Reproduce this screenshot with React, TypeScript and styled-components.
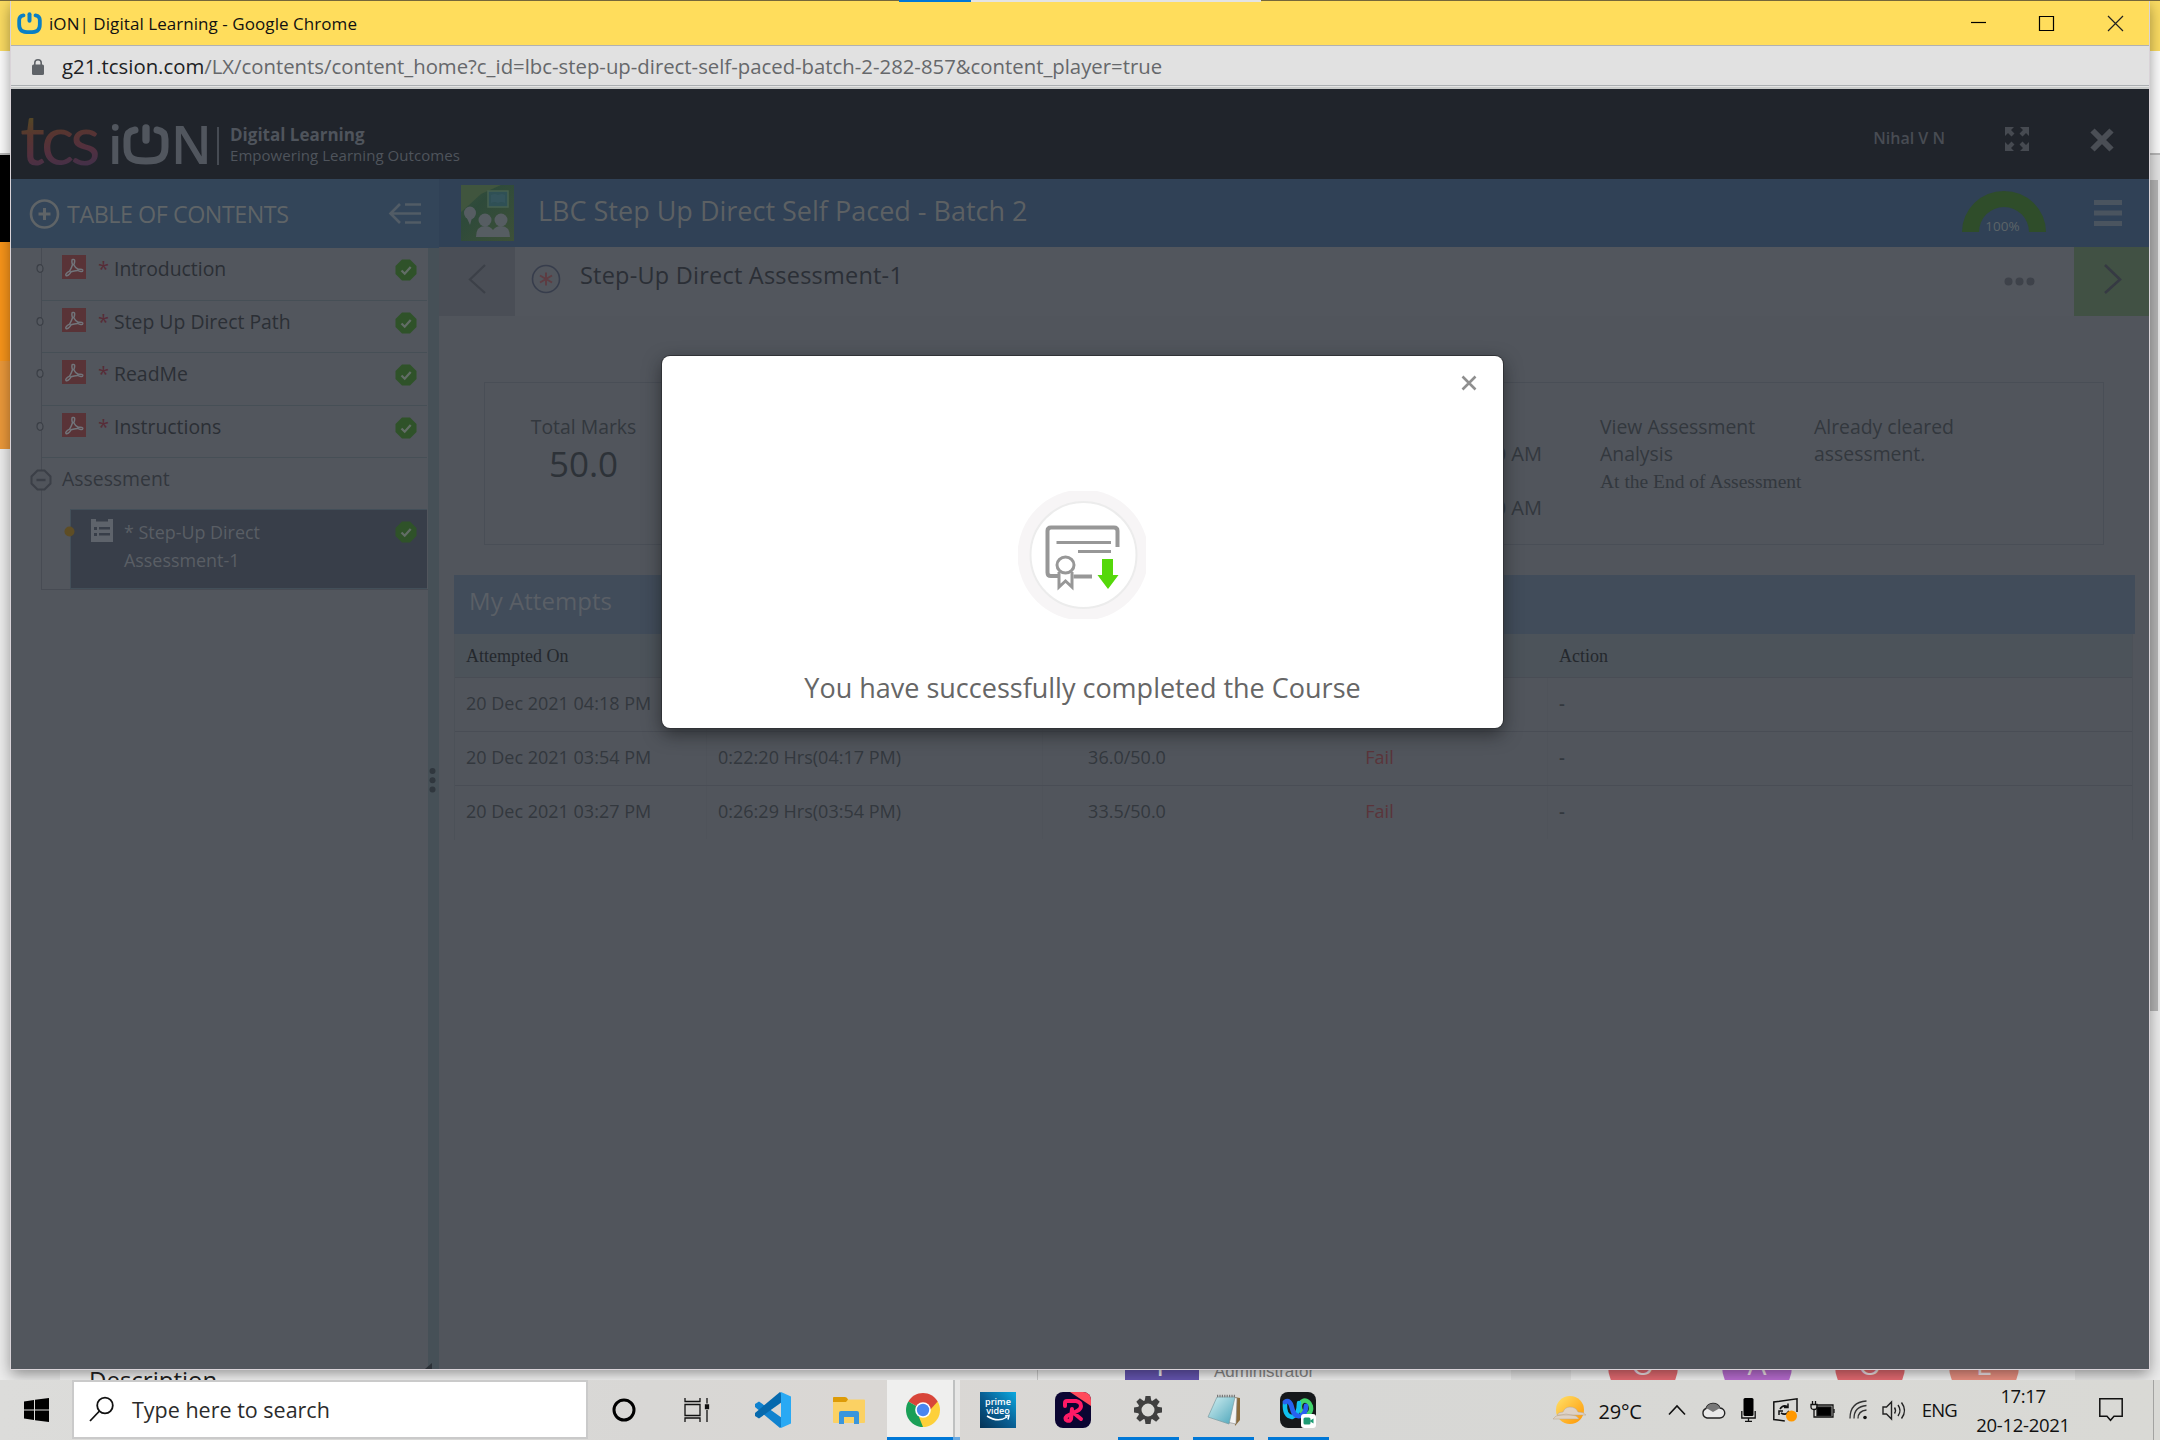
import React from 'react';
import styled, { createGlobalStyle } from 'styled-components';

const UI = '"Open Sans", "Noto Sans", sans-serif';
const SERIF = '"Liberation Serif", serif';

const GlobalStyle = createGlobalStyle`
  * { box-sizing: border-box; }
  html, body { margin: 0; padding: 0; }
  body { width: 2160px; height: 1440px; overflow: hidden; font-family: ${UI}; }
  svg { display: block; flex: none; overflow: visible; }
`;

const Text = styled.span<{ $size: number; $color?: string; $ls?: number; $weight?: number; $lh?: number; $serif?: boolean }>`
  display: block;
  white-space: nowrap;
  font-family: ${p => (p.$serif ? SERIF : UI)};
  font-size: ${p => p.$size}px;
  line-height: ${p => (p.$lh ? p.$lh + 'px' : '1.36')};
  letter-spacing: ${p => p.$ls ?? 0}px;
  font-weight: ${p => p.$weight ?? 400};
  color: ${p => p.$color ?? 'inherit'};
`;

/* ---------- desktop and the window behind ---------- */
const Desktop = styled.div`
  position: relative;
  width: 2160px;
  height: 1440px;
  overflow: hidden;
  background: #f6f6f6;
`;
const BackWindow = styled.div`
  display: flex;
  justify-content: space-between;
  height: 1380px;
`;
const EdgeColumn = styled.div<{ $w: number }>`
  display: flex;
  flex-direction: column;
  width: ${p => p.$w}px;
`;
const Band = styled.div<{ $h: number; $bg: string }>`
  flex: none;
  height: ${p => p.$h}px;
  background: ${p => p.$bg};
`;
const BottomStrip = styled.div`
  position: absolute;
  left: 0;
  top: 1340px;
  width: 2160px;
  height: 100px;
  background: #f8f8f8;
`;
const Strip = styled.div<{ $x: number; $w: number; $bg: string }>`
  position: absolute;
  left: ${p => p.$x}px;
  top: 0;
  width: ${p => p.$w}px;
  height: 40px;
  background: ${p => p.$bg};
`;
const Peek = styled.div<{ $x: number; $y: number }>`
  position: absolute;
  left: ${p => p.$x}px;
  top: ${p => p.$y}px;
`;
const AdminLabel = styled.span`
  display: block;
  font: 17px/22px "Liberation Sans", sans-serif;
  color: #8a8a8a;
`;
const Avatar = styled.div<{ $x: number; $bg: string }>`
  position: absolute;
  left: ${p => p.$x}px;
  top: -9px;
  width: 70px;
  height: 70px;
  border-radius: 50%;
  background: ${p => p.$bg};
  color: #f6e9ee;
  text-align: center;
  font: 30px/66px ${UI};
`;
const TopEdge = styled.div`
  position: absolute;
  left: 0;
  top: 0;
  width: 2160px;
  height: 2px;
  display: flex;
`;
const Seg = styled.div<{ $w: number; $bg: string; $h: number }>`
  width: ${p => p.$w}px;
  height: ${p => p.$h}px;
  background: ${p => p.$bg};
`;

/* ---------- chrome window ---------- */
const Window = styled.div`
  position: absolute;
  left: 11px;
  top: 1px;
  width: 2138px;
  height: 1368px;
  display: flex;
  flex-direction: column;
  background: #52565d;
  box-shadow: 0 0 0 1px #d9d3d8, 0 5px 14px rgba(0, 0, 0, 0.42);
  clip-path: inset(-2px -12px -30px -12px);
`;
const TitleBar = styled.div`
  flex: none;
  height: 44px;
  display: flex;
  align-items: center;
  background: #ffdd5c;
  padding: 1px 26px 0 6px;
`;
const AddressBar = styled.div`
  flex: none;
  height: 44px;
  display: flex;
  align-items: center;
  padding: 0 0 2px 21px;
  border-top: 1px solid #b1b1b1;
  background: linear-gradient(#e1e1e1 0 39px, #abafb2 39px 40px, #e4e4e4 40px 41px, #c9cbca 41px);
`;
const Spacer = styled.div<{ $w?: number }>`
  flex: ${p => (p.$w ? `0 0 ${p.$w}px` : '1')};
`;

const SiteHeader = styled.div`
  flex: none;
  height: 90px;
  display: flex;
  align-items: flex-start;
  background: #20242b;
  color: #484c53;
`;
const Logo = styled.div`
  display: flex;
  align-items: flex-start;
  height: 90px;
  padding-left: 9px;
`;
const Tcs = styled.span`
  font: 400 70px/88px "Lato", ${UI};
  letter-spacing: -4px;
  width: 88px;
  height: 90px;
  padding-top: 5px;
  color: transparent;
  background: linear-gradient(172deg, #554726 30%, #573530 48%, #53303e 66%, #41304a 86%);
  -webkit-background-clip: text;
  background-clip: text;
`;
const IonLetter = styled.span<{ $w: number }>`
  font: 600 52px/70px ${UI};
  padding-top: 20px;
  width: ${p => p.$w}px;
  color: #51565e;
`;
const LogoRule = styled.div`
  width: 2px;
  height: 38px;
  margin: 38px 11px 0 9px;
  background: #464b53;
`;
const LogoTag = styled.div`
  padding-top: 34px;
  color: #4f545c;
`;
const HeaderItem = styled.div<{ $top: number; $right: number }>`
  margin-top: ${p => p.$top}px;
  margin-right: ${p => p.$right}px;
`;

const Body = styled.div`
  flex: 1;
  display: flex;
  min-height: 0;
`;
const Sidebar = styled.div`
  width: 428px;
  flex: none;
  display: flex;
  flex-direction: column;
`;
const TocHeader = styled.div`
  flex: none;
  height: 69px;
  display: flex;
  align-items: center;
  background: #334559;
  color: #5f6467;
  padding: 0 18px 0 19px;
`;
const SideBody = styled.div`
  flex: 1;
  display: flex;
`;
const Tree = styled.div`
  width: 387px;
  height: 342px;
  margin-left: 30px;
  padding-right: 1px;
  border-left: 1px solid #474b53;
  border-bottom: 1px solid #474b53;
`;
const TreeRow = styled.div`
  height: 52.5px;
  display: flex;
  align-items: flex-start;
  border-bottom: 1px solid #464f56;
  color: #2b2f35;
`;
const TreeSection = styled(TreeRow)`
  height: 51px;
  border-bottom: none;
  color: #32373d;
`;
const Slot = styled.div<{ $top: number; $left?: number }>`
  margin-top: ${p => p.$top}px;
  margin-left: ${p => p.$left ?? 0}px;
`;
const Selected = styled.div`
  height: 80px;
  margin-left: 28px;
  display: flex;
  align-items: flex-start;
  background: #383e49;
  border: 1px solid #434f59;
  border-right: none;
  color: #5a5e65;
`;
const Splitter = styled.div`
  width: 11px;
  height: 1121px;
  background: #465057;
  display: flex;
  flex-direction: column;
  justify-content: space-between;
`;
const SplitDots = styled.div`
  padding-top: 519px;
`;

const Main = styled.div`
  flex: 1;
  display: flex;
  flex-direction: column;
`;
const CourseBar = styled.div`
  flex: none;
  height: 68px;
  display: flex;
  align-items: flex-start;
  background: #304156;
  color: #5c6063;
`;
const LessonBar = styled.div`
  flex: none;
  height: 69px;
  display: flex;
  align-items: center;
`;
const NavBox = styled.div<{ $next?: boolean }>`
  width: ${p => (p.$next ? 75 : 76)}px;
  height: 69px;
  background: ${p => (p.$next ? '#415144' : '#4a4e56')};
`;
const Content = styled.div`
  flex: 1;
  background: #51555c;
  padding: 66px 14px 0 15px;
`;
const Summary = styled.div`
  height: 163px;
  margin: 0 31px 0 30px;
  border: 1px solid #494e56;
  display: flex;
  align-items: flex-start;
  color: #33383e;
  padding-top: 30px;
`;
const Marks = styled.div`
  width: 197px;
  display: flex;
  flex-direction: column;
  align-items: center;
`;
const Cell = styled.div<{ $w: number }>`
  width: ${p => p.$w}px;
`;
const Times = styled.div<{ $w: number }>`
  width: ${p => p.$w}px;
  padding-top: 27px;
  display: flex;
  flex-direction: column;
  align-items: flex-end;
  gap: 27px;
`;
const SectionBar = styled.div`
  height: 59px;
  margin-top: 30px;
  padding: 10px 0 0 15px;
  background: #414c5a;
  color: #5a5f66;
`;
const Table = styled.div`
  border-left: 1px solid #4c5158;
  border-right: 1px solid #4c5158;
  margin-right: 2px;
`;
const TRow = styled.div<{ $h: number; $bg?: string; $last?: boolean }>`
  display: grid;
  grid-template-columns: 252px 336px 169px 336px 1fr;
  height: ${p => p.$h}px;
  background: ${p => p.$bg ?? 'transparent'};
  border-bottom: 1px solid ${p => (p.$last ? 'transparent' : '#494d55')};
  color: #33383e;
`;
const TCell = styled.div<{ $center?: boolean; $line?: boolean; $head?: boolean }>`
  display: flex;
  align-items: center;
  justify-content: ${p => (p.$center ? 'center' : 'flex-start')};
  padding-left: ${p => (p.$center ? 0 : 11)}px;
  padding-top: ${p => (p.$head ? 1 : 0)}px;
  padding-bottom: ${p => (p.$head ? 0 : 2)}px;
  border-right: 1px solid ${p => (p.$line ? '#4f535a' : 'transparent')};
`;

/* ---------- dialog ---------- */
const Dialog = styled.div`
  position: absolute;
  left: 651px;
  top: 355px;
  width: 841px;
  height: 372px;
  border-radius: 8px;
  background: #fff;
  box-shadow: 0 0 0 1px #303236, 0 6px 18px rgba(20, 22, 24, 0.6);
  display: flex;
  flex-direction: column;
  align-items: center;
`;
const DialogTop = styled.div`
  width: 100%;
  height: 135px;
  display: flex;
  justify-content: flex-end;
  padding: 19px 26px 0 0;
`;
const DialogArt = styled.div`
  margin-right: 2px;
`;

/* ---------- taskbar ---------- */
const Taskbar = styled.div`
  position: absolute;
  left: 0;
  top: 1380px;
  width: 2160px;
  height: 60px;
  display: flex;
  background: linear-gradient(90deg, #dcdcda 0, #d8d7d5 30%, #dad7d4 40%, #d7d7d5 60%, #d9d9d5 100%);
  color: #111;
`;
const SearchBox = styled.div`
  width: 516px;
  height: 59px;
  border: 2px solid #cacaca;
  background: #fff;
  display: flex;
  align-items: center;
  padding-left: 15px;
  gap: 18px;
`;
const TaskItem = styled.div<{ $w: number; $bg?: string; $bar?: boolean }>`
  width: ${p => p.$w}px;
  height: 60px;
  flex: none;
  display: flex;
  align-items: center;
  justify-content: center;
  background: ${p => p.$bg ?? 'transparent'};
  border-top: 3px solid transparent;
  border-bottom: 3px solid ${p => (p.$bar ? '#0078d7' : 'transparent')};
`;
const GroupEdge = styled.div`
  width: 7px;
  height: 60px;
  background: linear-gradient(90deg, #bfc1c1 0 2px, #e7e7e6 2px);
  border-bottom: 3px solid #6aa9e0;
  background-clip: padding-box;
`;
const Clock = styled.div`
  display: flex;
  flex-direction: column;
  align-items: center;
  width: 92px;
`;
const ShowDesktop = styled.div`
  width: 7px;
  height: 60px;
  border-left: 1px solid #a3a3a1;
`;

const PowerGlyph = ({ w, h, color, sw }: { w: number; h: number; color: string; sw: number }) => (
  <svg width={w} height={h} viewBox="0 0 46 40" fill="none" stroke={color} strokeWidth={sw} strokeLinecap="round">
    <path d="M12 4C6 5 4 8 4 13v8c0 11 5 14 19 14s19-3 19-14v-8c0-5-2-8-8-9" />
    <path d="M23 2v12" strokeWidth={sw * 1.05} />
  </svg>
);

const PdfIcon = () => (
  <svg width="24" height="24" viewBox="0 0 24 24">
    <rect width="24" height="24" fill="#593337" />
    <path d="M11.600 4.500c1.600 0 1.200 2.600.2 5.200 1.200 2.600 2.600 3.800 4.400 4.600 3.400-.4 4.800.2 4.600 1.400-.3 1.500-3 .9-5.200-.3-2.200.2-4.600.7-6.600 1.400-1.800 3.100-3.800 4.700-4.900 3.800-1.100-1.100.6-2.900 3.500-4.400 1.200-2 2.200-4.200 2.900-6.400-.8-2.600-.9-5.300.1-5.300z" fill="none" stroke="#71757b" strokeWidth="1.500" />
  </svg>
);
const CheckIcon = () => (
  <svg width="22" height="22" viewBox="0 0 22 22">
    <path d="M7 .5h8l6.500 6.500v8l-6.500 6.500h-8l-6.500-6.500v-8z" fill="#2f5229" />
    <path d="M6.500 11.500l3.200 3.200 6-6.700" fill="none" stroke="#626d66" strokeWidth="2.300" />
  </svg>
);
const Bullet = () => (
  <svg width="8" height="9" viewBox="0 0 8 9">
    <ellipse cx="4" cy="4.500" rx="3" ry="3.800" fill="#555960" stroke="#3b3f46" strokeWidth="1.200" />
  </svg>
);

const lessons = ['Introduction', 'Step Up Direct Path', 'ReadMe', 'Instructions'];
const attempts = [
  { on: '20 Dec 2021 04:18 PM', time: '', marks: '', result: '' },
  { on: '20 Dec 2021 03:54 PM', time: '0:22:20 Hrs(04:17 PM)', marks: '36.0/50.0', result: 'Fail' },
  { on: '20 Dec 2021 03:27 PM', time: '0:26:29 Hrs(03:54 PM)', marks: '33.5/50.0', result: 'Fail' },
];

const Background = () => (
  <>
    <BackWindow>
      <EdgeColumn $w={20}>
        <Band $h={51} $bg="#fadb62" />
        <Band $h={102} $bg="#fbfbfb" />
        <Band $h={2} $bg="#b9b9b9" />
        <Band $h={87} $bg="#000" />
        <Band $h={119} $bg="#f7941a" />
        <Band $h={88} $bg="#ea983a" />
        <Band $h={931} $bg="#ececec" />
      </EdgeColumn>
      <EdgeColumn $w={20}>
        <Band $h={51} $bg="#fadb62" />
        <Band $h={102} $bg="#fbfbfb" />
        <Band $h={2} $bg="#b9b9b9" />
        <Band $h={25} $bg="#e4e4e4" />
        <Band $h={831} $bg="linear-gradient(90deg, #b4b4b4 0 18px, #e8e8e8 18px)" />
        <Band $h={369} $bg="#ececec" />
      </EdgeColumn>
    </BackWindow>
    <BottomStrip>
      <Strip $x={0} $w={60} $bg="#ececec" />
      <Strip $x={1037} $w={1} $bg="#d0d0d0" />
      <Strip $x={1511} $w={60} $bg="#ebebeb" />
      <Strip $x={2075} $w={85} $bg="#ebebeb" />
      <Strip $x={1125} $w={74} $bg="#6757b4" />
      <Peek $x={89} $y={25}><Text $size={24} $lh={30} $color="#222">Description</Text></Peek>
      <Peek $x={1156} $y={5}><Text $size={30} $lh={40} $color="#f2f2f2">P</Text></Peek>
      <Peek $x={1214} $y={21}><AdminLabel>Administrator</AdminLabel></Peek>
      <Avatar $x={1608} $bg="#ea6d74">O</Avatar>
      <Avatar $x={1722} $bg="#bd6fd6">A</Avatar>
      <Avatar $x={1835} $bg="#ea6d74">O</Avatar>
      <Avatar $x={1949} $bg="#ef9384">E</Avatar>
    </BottomStrip>
  </>
);

const SiteTop = () => (
  <SiteHeader>
    <Logo>
      <Tcs>tcs</Tcs>
      <IonLetter $w={15}>i</IonLetter>
      <Slot $top={37}><PowerGlyph w={46} h={40} color="#51565e" sw={7} /></Slot>
      <Spacer $w={2} />
      <IonLetter $w={37}>N</IonLetter>
      <LogoRule />
      <LogoTag>
        <Text $size={17} $lh={24} $weight={700}>Digital Learning</Text>
        <Text $size={15} $lh={17} $ls={0.050}>Empowering Learning Outcomes</Text>
      </LogoTag>
    </Logo>
    <Spacer />
    <HeaderItem $top={37} $right={60}><Text $size={16} $lh={24} $weight={600}>Nihal V N</Text></HeaderItem>
    <HeaderItem $top={38} $right={61}>
      <svg width="24" height="24" viewBox="0 0 24 24" fill="#464a51">
        <path d="M0 0h9L6 3l3.500 3.500-3 3L3 6 0 9zM24 0v9l-3-3-3.500 3.500-3-3L18 3l-3-3zM0 24v-9l3 3 3.500-3.500 3 3L6 21l3 3zM24 24h-9l3-3-3.500-3.500 3-3L21 18l3-3z" />
      </svg>
    </HeaderItem>
    <HeaderItem $top={39} $right={35}>
      <svg width="24" height="24" viewBox="0 0 24 24" stroke="#4a4e55" strokeWidth="6"><path d="M2.500 2.500l19 19M21.500 2.500l-19 19" /></svg>
    </HeaderItem>
  </SiteHeader>
);

const Contents = () => (
  <Sidebar>
    <TocHeader>
      <svg width="30" height="30" viewBox="0 0 30 30" fill="none" stroke="#5f6467">
        <circle cx="14.500" cy="15" r="13.500" strokeWidth="2.600" />
        <path d="M14.500 9v12M8.500 15h12" strokeWidth="3" />
      </svg>
      <Spacer $w={7} />
      <Slot $top={2}><Text $size={23.300} $ls={-0.450}>TABLE OF CONTENTS</Text></Slot>
      <Spacer />
      <svg width="32" height="24" viewBox="0 0 32 24" fill="none" stroke="#525c66" strokeWidth="2.600">
        <path d="M11 2L1.500 11.500 11 21M2 11.500h30M16 2.500h16M16 20.500h16" />
      </svg>
    </TocHeader>
    <SideBody>
      <Tree>
        {lessons.map(name => (
          <TreeRow key={name}>
            <Slot $top={16} $left={-6}><Bullet /></Slot>
            <Slot $top={7} $left={18}><PdfIcon /></Slot>
            <Slot $top={7} $left={12}><Text $size={20} $lh={28} $color="#572c37">*</Text></Slot>
            <Slot $top={7} $left={5}><Text $size={19.400} $lh={28}>{name}</Text></Slot>
            <Spacer />
            <Slot $top={11}><CheckIcon /></Slot>
            <Spacer $w={10} />
          </TreeRow>
        ))}
        <TreeSection>
          <Slot $top={11} $left={-12}>
            <svg width="22" height="22" viewBox="0 0 22 22" fill="#50545b" stroke="#3b3f47">
              <path d="M7.500 1.500h7l6 6v7l-6 6h-7l-6-6v-7z" strokeWidth="2" />
              <path d="M6.500 11h9" strokeWidth="2.400" />
            </svg>
          </Slot>
          <Slot $top={7} $left={10}><Text $size={19.400} $lh={28}>Assessment</Text></Slot>
        </TreeSection>
        <Selected>
          <Slot $top={16} $left={-7}>
            <svg width="11" height="11" viewBox="0 0 11 11"><circle cx="5.500" cy="5.500" r="5" fill="#5e4d25" /></svg>
          </Slot>
          <Slot $top={8} $left={16}>
            <svg width="22" height="24" viewBox="0 0 22 24">
              <path d="M0 1h22v23H0z" fill="#5e636b" />
              <path d="M5 1h3l1-1h4l1 1h3v2.500H5zM3 9h3v3H3zM8 9h11v2.500H8zM3 15h3v3H3zM8 15h11v2.500H8z" fill="#383e49" />
            </svg>
          </Slot>
          <Slot $top={8} $left={11}>
            <Text $size={17.900} $lh={28}>* Step-Up Direct</Text>
            <Text $size={17.900} $lh={28}>Assessment-1</Text>
          </Slot>
          <Spacer />
          <Slot $top={11}><CheckIcon /></Slot>
          <Spacer $w={10} />
        </Selected>
      </Tree>
      <Splitter>
        <SplitDots>
          <svg width="11" height="28" viewBox="0 0 11 28" fill="#30373e">
            <circle cx="4.500" cy="4" r="3" /><circle cx="4.500" cy="13.300" r="3" /><circle cx="4.500" cy="22.600" r="3" />
          </svg>
        </SplitDots>
        <svg width="6" height="6" viewBox="0 0 6 6"><path d="M4 0v6H-3z" fill="#2c3137" /></svg>
      </Splitter>
    </SideBody>
  </Sidebar>
);

const Course = () => (
  <Main>
    <CourseBar>
      <Slot $top={6} $left={22}>
        <svg width="53" height="56" viewBox="0 0 53 56">
          <defs>
            <linearGradient id="cover" x1="0" y1="0" x2="1" y2="1">
              <stop offset="0" stopColor="#37513f" /><stop offset=".35" stopColor="#2e4a3a" /><stop offset="1" stopColor="#3d5038" />
            </linearGradient>
          </defs>
          <rect width="53" height="56" fill="url(#cover)" />
          <path d="M0 0h40L20 9 8 20 0 27z" fill="#40553e" />
          <path d="M27 6h20v16H27z" fill="#2f5055" stroke="#47604f" strokeWidth="1.500" />
          <path d="M30 10q4-2 7 0 4-2 7 0v8q-4-2-7 0-3-2-7 0z" fill="#34545c" />
          <g fill="#565d62">
            <ellipse cx="9" cy="28" rx="6" ry="6.500" /><path d="M5 31l4 9 2-7z" />
            <circle cx="24" cy="35" r="6.500" /><circle cx="40" cy="35" r="6.500" />
            <path d="M15 52q0-11 9-11 5 0 8 4 3-4 8-4 9 0 9 11z" />
          </g>
        </svg>
      </Slot>
      <Slot $top={13} $left={24}><Text $size={27} $lh={38}>LBC Step Up Direct Self Paced - Batch 2</Text></Slot>
      <Spacer />
      <Slot $top={12}>
        <svg width="84" height="41" viewBox="0 0 84 41">
          <path d="M0 41a42 41 0 0 1 84 0H67a25 25 0 0 0-50 0z" fill="#2f4d2a" />
          <text x="40.500" y="39.500" fontFamily="Open Sans" fontSize="13.500" fontWeight="500" fill="#5c6468" textAnchor="middle">100%</text>
        </svg>
      </Slot>
      <Slot $top={21} $left={48}>
        <svg width="28" height="27" viewBox="0 0 28 27" fill="#4a545f"><path d="M0 0h28v5H0zM0 10.500h28v5H0zM0 21h28v5H0z" /></svg>
      </Slot>
      <Spacer $w={27} />
    </CourseBar>
    <LessonBar>
      <NavBox>
        <svg width="76" height="69" viewBox="0 0 76 69" fill="none" stroke="#3c4048" strokeWidth="2.200"><path d="M46 18L31 32.500 46 46" /></svg>
      </NavBox>
      <Slot $top={-5} $left={16}>
        <svg width="30" height="30" viewBox="0 0 30 30" fill="none">
          <circle cx="15" cy="15" r="13.500" stroke="#373d4c" strokeWidth="1.600" />
          <path d="M15 8.500v13M9 11.500l12 7M21 11.500l-12 7" stroke="#5d3c42" strokeWidth="2" />
        </svg>
      </Slot>
      <Slot $top={-12} $left={19}><Text $size={23.500} $color="#2b2f36" $ls={0.220}>Step-Up Direct Assessment-1</Text></Slot>
      <Spacer />
      <svg width="32" height="9" viewBox="0 0 32 9" fill="#3e424a"><circle cx="4.500" cy="4.500" r="4" /><circle cx="15.500" cy="4.500" r="4" /><circle cx="26.500" cy="4.500" r="4" /></svg>
      <Spacer $w={38} />
      <NavBox $next>
        <svg width="75" height="69" viewBox="0 0 75 69" fill="none" stroke="#363a43" strokeWidth="2.600"><path d="M31 18L46 32.500 31 46" /></svg>
      </NavBox>
    </LessonBar>
    <Content>
      <Summary>
        <Marks>
          <Text $size={19.400} $lh={28}>Total Marks</Text>
          <Text $size={35} $lh={46} $color="#2d3238">50.0</Text>
        </Marks>
        <Times $w={860}>
          <Text $size={20} $lh={27}>10:00 AM</Text>
          <Text $size={20} $lh={27}>10:00 AM</Text>
        </Times>
        <Spacer $w={58} />
        <Cell $w={214}>
          <Text $size={19.400} $lh={27}>View Assessment</Text>
          <Text $size={19.400} $lh={27}>Analysis</Text>
          <Text $size={19.500} $lh={29} $serif>At the End of Assessment</Text>
        </Cell>
        <Cell $w={214}>
          <Text $size={19.400} $lh={27}>Already cleared</Text>
          <Text $size={19.400} $lh={27}>assessment.</Text>
        </Cell>
      </Summary>
      <SectionBar><Text $size={24} $lh={32} $ls={0.050}>My Attempts</Text></SectionBar>
      <Table>
        <TRow $h={44} $bg="#4c535a">
          <TCell $head><Text $size={18} $serif $color="#24282d">Attempted On</Text></TCell>
          <TCell /><TCell /><TCell />
          <TCell $head><Text $size={18} $serif $color="#24282d">Action</Text></TCell>
        </TRow>
        {attempts.map((a, i) => (
          <TRow key={a.on} $h={54} $last={i === 2}>
            <TCell $line><Text $size={18}>{a.on}</Text></TCell>
            <TCell $line><Text $size={18}>{a.time}</Text></TCell>
            <TCell $center><Text $size={18}>{a.marks}</Text></TCell>
            <TCell $center $line><Text $size={18} $color="#5a343a">{a.result}</Text></TCell>
            <TCell><Text $size={18} $weight={600}>-</Text></TCell>
          </TRow>
        ))}
      </Table>
    </Content>
  </Main>
);

const CourseDialog = () => (
  <Dialog>
    <DialogTop>
      <svg width="16" height="16" viewBox="0 0 16 16" stroke="#8f8f8f" strokeWidth="2.600"><path d="M1.500 1.500l13 13M14.500 1.500l-13 13" /></svg>
    </DialogTop>
    <DialogArt>
      <svg width="128" height="128" viewBox="0 0 128 128" fill="none">
        <clipPath id="ring"><rect width="128" height="128" /></clipPath>
        <circle cx="65" cy="64" r="65.500" fill="#f7f5f6" clipPath="url(#ring)" />
        <circle cx="65.500" cy="64" r="53" fill="#fff" stroke="#ececec" strokeWidth="2" />
        <g stroke="#979797">
          <path d="M99.500 56V40q0-3.500-3.500-3.500H33q-3.500 0-3.500 3.500v41.500q0 3.500 3.500 3.500h7M55.500 85.500H74" strokeWidth="4" />
          <path d="M38.500 51.500H93M60 60.500h33" strokeWidth="3" />
          <ellipse cx="47.500" cy="74" rx="8.500" ry="8" strokeWidth="3" />
          <path d="M41 81v15l6.500-6 6.500 6V81" strokeWidth="3" />
        </g>
        <path d="M84 68h11v16h5.500L90 98 79.500 84H84z" fill="#55d80a" />
      </svg>
    </DialogArt>
    <Slot $top={50}><Text $size={27} $lh={38} $color="#666">You have successfully completed the Course</Text></Slot>
  </Dialog>
);

const Bar = () => (
  <Taskbar>
    <TaskItem $w={72}>
      <svg width="25" height="24" viewBox="0 0 25 24" fill="#000"><path d="M0 3.500l10-1.500v9.500H0zM11 1.800L25 0v11.500H11zM0 12.500h10V22L0 20.500zM11 12.500h14V24l-14-1.800z" /></svg>
    </TaskItem>
    <SearchBox>
      <svg width="25" height="25" viewBox="0 0 25 25" fill="none" stroke="#111" strokeWidth="1.800"><circle cx="16" cy="8.500" r="7.800" /><path d="M10.500 14L1 24" /></svg>
      <Slot $top={1}><Text $size={21.500} $color="#2b2b2b">Type here to search</Text></Slot>
    </SearchBox>
    <TaskItem $w={72}>
      <svg width="24" height="24" viewBox="0 0 24 24"><circle cx="12" cy="12" r="10" fill="none" stroke="#000" strokeWidth="3" /></svg>
    </TaskItem>
    <TaskItem $w={74}>
      <svg width="26" height="24" viewBox="0 0 26 24" fill="none" stroke="#111" strokeWidth="1.300">
        <path d="M1 0v3.500h15V0M1 6.500h15v11H1zM1 24v-4h15v4M23 0v5.500M23 12v12" /><path d="M21.500 7h3v3.500h-3z" fill="#111" />
      </svg>
    </TaskItem>
    <TaskItem $w={78}>
      <svg width="36" height="36" viewBox="0 0 36 36">
        <path d="M26 0L6 18l20 18V26L14.500 18 26 9z" fill="#0a78c2" />
        <path d="M4 9.500L0 12v3l25 21 2-10z" fill="#1082cf" />
        <path d="M4 26.500L0 24v-3L25 0l2 10z" fill="#0669ad" />
        <path d="M26 0l10 4.500v27L26 36z" fill="#29a9f4" />
      </svg>
    </TaskItem>
    <TaskItem $w={73}>
      <svg width="32" height="27" viewBox="0 0 32 27">
        <path d="M0 1q0-1 1-1h11q2 0 3 2.500h16q1 0 1 1V25q0 1-1 1H1q-1 0-1-1z" fill="#fbd163" />
        <path d="M0 5V1q0-1 1-1h11q2 0 3 2.500L13 5z" fill="#dd9b07" />
        <path d="M6 27V16q0-2 2-2h16q2 0 2 2v11h-5v-7H11v7z" fill="#3a96dd" />
      </svg>
    </TaskItem>
    <Spacer $w={2} />
    <TaskItem $w={66} $bg="#efefee" $bar>
      <Slot $top={0} $left={5}>
        <svg width="34" height="34" viewBox="0 0 34 34">
          <path d="M17 17L2.300 8.500A17 17 0 0 1 31.700 8.500z" fill="#d84539" />
          <path d="M17 17L31.700 8.500A17 17 0 0 1 17 34z" fill="#fdd03a" />
          <path d="M17 17V34A17 17 0 0 1 2.300 8.500z" fill="#1a9f57" />
          <path d="M9.500 8.500h22.200L24 17z" fill="#d84539" /><path d="M13 24L23.500 21 17 34z" fill="#fdd03a" /><path d="M2.300 8.500L11 21l-3 4z" fill="#1a9f57" />
          <circle cx="17" cy="17" r="7.800" fill="#fff" /><circle cx="17" cy="17" r="6.200" fill="#4a86f0" />
        </svg>
      </Slot>
    </TaskItem>
    <GroupEdge />
    <TaskItem $w={76}>
      <svg width="36" height="36" viewBox="0 0 36 36">
        <defs><linearGradient id="prime" x1="1" y1="0" x2="0" y2="1"><stop offset="0" stopColor="#0ba9e0" /><stop offset=".5" stopColor="#095f94" /><stop offset="1" stopColor="#063355" /></linearGradient></defs>
        <rect width="36" height="36" fill="url(#prime)" />
        <text x="18" y="13" fill="#fff" fontFamily="Open Sans" fontWeight="600" fontSize="9" textAnchor="middle">prime</text>
        <text x="18" y="22" fill="#fff" fontFamily="Open Sans" fontWeight="600" fontSize="9" textAnchor="middle">video</text>
        <path d="M7 24q11 7 20 1M25 24l4-.5-1 4" fill="none" stroke="#fff" strokeWidth="1.500" />
      </svg>
    </TaskItem>
    <TaskItem $w={74}>
      <svg width="36" height="36" viewBox="0 0 36 36">
        <clipPath id="tile"><rect width="36" height="36" rx="8" /></clipPath>
        <g clipPath="url(#tile)">
          <rect width="36" height="36" fill="#0b0532" /><path d="M15 0h21v14z" fill="#ff4a5b" />
        </g>
        <path d="M10 14V11q0-2 2-2h9q5 1 5 5 0 3-4 5l-10 5q-3 3 0 4.500 3 1 4-1.500l1-10M20 22l6 5" fill="none" stroke="#ff1a66" strokeWidth="4" strokeLinejoin="round" strokeLinecap="round" />
      </svg>
    </TaskItem>
    <Spacer $w={8} />
    <TaskItem $w={61} $bar>
      <Slot $top={0} $left={-2}>
        <svg width="28" height="28" viewBox="0 0 28 28">
          <g fill="#404040">{[0, 45, 90, 135, 180, 225, 270, 315].map(a => <path key={a} d="M11.500 0h5l1 6h-7z" transform={`rotate(${a} 14 14)`} />)}</g>
          <circle cx="14" cy="14" r="8.300" fill="#d9d9d6" stroke="#404040" strokeWidth="3.600" />
        </svg>
      </Slot>
    </TaskItem>
    <Spacer $w={14} />
    <TaskItem $w={61} $bar>
      <svg width="34" height="32" viewBox="0 0 34 32">
        <defs><linearGradient id="pad" x1="0" y1="0" x2="1" y2="1"><stop offset="0" stopColor="#d4f0f2" /><stop offset="1" stopColor="#4ba5ba" /></linearGradient></defs>
        <path d="M27 3l6 1v22l-5 6z" fill="#8a6b3a" /><path d="M25 3l5 1-1 26-9-2z" fill="#f4f4f2" stroke="#888" strokeWidth=".6" />
        <path d="M10 3h18l-6 27L1 23z" fill="url(#pad)" stroke="#7b9ba0" strokeWidth=".7" />
        <path d="M10 2h18" stroke="#777" strokeWidth="2.500" strokeDasharray="1.200 1.200" />
      </svg>
    </TaskItem>
    <Spacer $w={14} />
    <TaskItem $w={61} $bar>
      <Slot $top={0} $left={-1}>
        <svg width="36" height="36" viewBox="0 0 36 36" fill="none" strokeLinecap="round">
          <rect width="36" height="36" rx="8" fill="#15181a" />
          <ellipse cx="25.500" cy="15.500" rx="5.500" ry="7" stroke="#41d46c" strokeWidth="4.500" transform="rotate(-15 25.500 15.500)" />
          <path d="M5 11q-1 13 7 14 7-2 7-14" stroke="#10c0ef" strokeWidth="4.500" />
          <path d="M5 10q5-3 7 6 2 9 8 8 6-2 6-10" stroke="#2861f0" strokeWidth="4.800" />
          <rect x="21" y="22" width="15" height="14" rx="3" fill="#fff" />
          <rect x="23.500" y="25.500" width="7" height="7" rx="1.500" fill="#1d9b73" />
          <path d="M29.500 29l4-2.500v5z" fill="#1d9b73" />
        </svg>
      </Slot>
    </TaskItem>
    <Spacer />
    <TaskItem $w={38}>
      <svg width="34" height="28" viewBox="0 0 34 28">
        <defs><linearGradient id="sun" x1="0" y1="0" x2="1" y2="1"><stop offset="0" stopColor="#ffe26b" /><stop offset="1" stopColor="#ff9500" /></linearGradient></defs>
        <circle cx="17" cy="14" r="14" fill="url(#sun)" />
        <path d="M4 19q1-3 6-3 2-5 7-5 6 0 8 5 6 0 8 3zM0 23q2-4 8-4 5-2 10 0 6 0 8 4z" fill="#ded2c6" stroke="#b7a48e" strokeWidth=".5" />
      </svg>
    </TaskItem>
    <Spacer $w={10} />
    <Slot $top={16}><Text $size={20} $lh={32} $ls={-0.200}>29°C</Text></Slot>
    <Spacer $w={17} />
    <TaskItem $w={36}><svg width="18" height="10" viewBox="0 0 18 10" fill="none" stroke="#111" strokeWidth="1.600"><path d="M1 9.500L9 1l8 8.500" /></svg></TaskItem>
    <TaskItem $w={36}>
      <svg width="24" height="17" viewBox="0 0 24 17"><path d="M6 16a5 5 0 0 1-1-9.500A7.500 7.500 0 0 1 19 6a5 5 0 0 1-.5 10z" fill="#e9e9e9" stroke="#222" strokeWidth="1.400" /><path d="M5 6.500A7.500 7.500 0 0 1 19 6l-7 4-5-3z" fill="#777" /></svg>
    </TaskItem>
    <TaskItem $w={36}>
      <svg width="15" height="24" viewBox="0 0 15 24"><rect x="2.500" width="10" height="18" rx="1.500" fill="#000" /><path d="M.8 13v7h13.400v-7M7.500 20v3M4 23.300h7" fill="none" stroke="#111" strokeWidth="1.300" /></svg>
    </TaskItem>
    <TaskItem $w={38}>
      <svg width="25" height="24" viewBox="0 0 25 24" fill="none" stroke="#111" strokeWidth="1.500"><path d="M24 14V.8L.8 4v17.500l11 1.500" /><path d="M7 11q3-5 8-2M15 5.500v4h-4M6 17v-4h4M16 13q-3 5-8 2" /><circle cx="18.500" cy="18" r="5.500" fill="#ff9800" stroke="none" /></svg>
    </TaskItem>
    <TaskItem $w={36}>
      <svg width="25" height="18" viewBox="0 0 25 18" fill="none" stroke="#111" strokeWidth="1.300"><path d="M6.500 4H23v12H4V9" /><rect x="7" y="6" width="14" height="8.500" fill="#000" /><path d="M24 8v4M1 3.500h6v2.500q0 2.500-3 2.500t-3-2.500zM2.500 0v3.500M5.500 0v3.500" /></svg>
    </TaskItem>
    <TaskItem $w={35}>
      <svg width="18" height="20" viewBox="0 0 18 20" fill="none" stroke="#333" strokeWidth="1.300"><path d="M1 18.500Q1 2 17.500 1M5 18.500Q5 6.500 17.500 5.500M9 18.500Q9 11 17.500 10" /><circle cx="16" cy="17.500" r="1.800" fill="#111" stroke="none" /></svg>
    </TaskItem>
    <TaskItem $w={36}>
      <svg width="24" height="19" viewBox="0 0 24 19" fill="none" stroke="#222" strokeWidth="1.400"><path d="M1 6v7h3.500l5 5V1l-5 5zM12.500 6.500q2 3 0 6M16 4q4 5.500 0 11M19.500 1.500q6 8 0 16" /></svg>
    </TaskItem>
    <Spacer $w={10} />
    <Slot $top={14}><Text $size={18.500} $lh={32} $ls={-0.800}>ENG</Text></Slot>
    <Spacer $w={20} />
    <Clock>
      <Text $size={18.500} $lh={31} $ls={-0.400}>17:17</Text>
      <Text $size={18.500} $lh={27} $ls={-0.300}>20-12-2021</Text>
    </Clock>
    <TaskItem $w={84}>
      <svg width="24" height="24" viewBox="0 0 24 24" fill="none" stroke="#111" strokeWidth="1.500"><path d="M.8.8h22.400v17.500H15l-3.500 4-3.500-4H.8z" /></svg>
    </TaskItem>
    <ShowDesktop />
  </Taskbar>
);

export default function App() {
  return (
    <Desktop>
      <GlobalStyle />
      <Background />
      <Window>
        <TitleBar>
          <PowerGlyph w={25} h={26} color="#0a7fc4" sw={7} />
          <Spacer $w={7} />
          <Text $size={17} $color="#111" $ls={0.060}>iON| Digital Learning - Google Chrome</Text>
          <Spacer />
          <svg width="15" height="15" viewBox="0 0 15 15" stroke="#000" strokeWidth="1.200"><path d="M0 6.500h15" /></svg>
          <Spacer $w={53} />
          <svg width="15" height="15" viewBox="0 0 15 15" fill="none" stroke="#000" strokeWidth="1.200"><path d="M.5.500h14v14H.5z" /></svg>
          <Spacer $w={54} />
          <svg width="15" height="15" viewBox="0 0 15 15" stroke="#222" strokeWidth="1.200"><path d="M0 0l15 15M15 0L0 15" /></svg>
        </TitleBar>
        <AddressBar>
          <svg width="12" height="16" viewBox="0 0 12 16"><rect y="5.500" width="12" height="10.500" rx="1.500" fill="#5f6368" /><path d="M2.800 6V3.800a3.200 3 0 0 1 6.400 0V6" fill="none" stroke="#5f6368" strokeWidth="1.600" /></svg>
          <Spacer $w={18} />
          <Text $size={20.330} $color="#202124">g21.tcsion.com</Text>
          <Text $size={20.330} $color="#66686b">/LX/contents/content_home?c_id=lbc-step-up-direct-self-paced-batch-2-282-857&amp;content_player=true</Text>
        </AddressBar>
        <SiteTop />
        <Body>
          <Contents />
          <Course />
        </Body>
        <CourseDialog />
      </Window>
      <TopEdge>
        <Seg $w={899} $h={1} $bg="#75673a" />
        <Seg $w={72} $h={2} $bg="#0078d7" />
        <Seg $w={290} $h={2} $bg="#e3e3e3" />
        <Seg $w={899} $h={1} $bg="#75673a" />
      </TopEdge>
      <Bar />
    </Desktop>
  );
}
